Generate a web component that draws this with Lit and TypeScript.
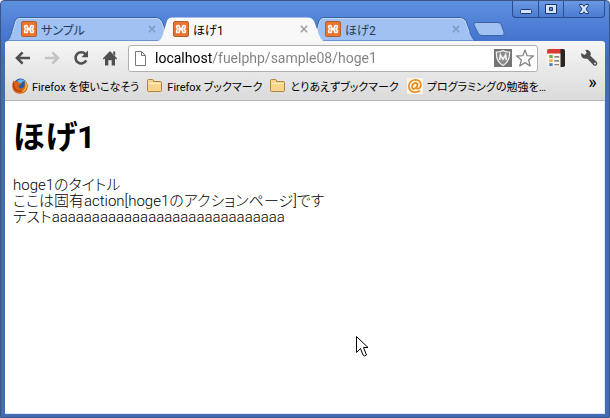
import { LitElement, html, svg, css, nothing } from "lit";
import { customElement, property } from "lit/decorators.js";

const icons: Record<string, unknown> = {
  xampp: svg`<rect x="0.5" y="0.5" width="15" height="15" rx="1.5" fill="#ec7431" stroke="#b0602f"/>
    <path d="M6 4.5H4.8Q3.6 4.5 3.6 5.6Q3.6 6.8 4.8 8Q3.6 9.2 3.6 10.4Q3.6 11.5 4.8 11.5H5.4Q6.4 11.5 6.4 10.4V9Q8 8 9.6 9V10.4Q9.6 11.5 10.6 11.5H11.2Q12.4 11.5 12.4 10.4Q12.4 9.2 11.2 8Q12.4 6.8 12.4 5.6Q12.4 4.5 11.2 4.5H10.6Q9.6 4.5 9.6 5.6V7Q8 8 6.4 7V5.6Q6.4 4.5 5.4 4.5" fill="none" stroke="#fff" stroke-width="1.6"/>`,
  back: svg`<path d="M15 8H3M7.6 2.4L2 8L7.6 13.6" fill="none" stroke="#505050" stroke-width="2.6"/>`,
  forward: svg`<path d="M1 8H13M8.4 2.4L14 8L8.4 13.6" fill="none" stroke="#c4c4c4" stroke-width="2.6"/>`,
  reload: svg`<path d="M12.4 4.2A5.6 5.6 0 1 0 13.2 10.4" fill="none" stroke="#505050" stroke-width="2.6"/><path d="M15 0.6V7.2H8.4Z" fill="#505050"/>`,
  home: svg`<path d="M8 1L15.2 8.6L14.2 9.6L13 8.6V15.4H9.7V10.2H6.3V15.4H3V8.6L1.8 9.6L0.8 8.6Z" fill="#505050"/><path d="M11.2 1.4H13.2V6L11.2 4Z" fill="#505050"/>`,
  page: svg`<path d="M2.5 1.5H8.5L12.5 5.5V15.5H2.5Z" fill="#fff" stroke="#777"/><path d="M8.5 1.5V5.5H12.5" fill="none" stroke="#777"/>`,
  star: svg`<path d="M8 0L10.2 5.7L16.4 6L11.6 9.9L13.2 16L8 12.6L2.8 16L4.4 9.9L-0.4 6L5.8 5.7Z" fill="#fff" stroke="#858585" stroke-width="1.3" stroke-linejoin="round"/>`,
  shield: svg`<rect x="-1" y="-1" width="18" height="18" fill="#747474"/><path d="M8 0.6Q10.5 2.2 14.6 2Q15.2 11.4 8 15.4Q0.8 11.4 1.4 2Q5.5 2.2 8 0.6Z" fill="#8c8c8c" stroke="#f2f2f2" stroke-width="1.2"/><path d="M4.6 10L5.4 5L8 9.2L10.6 5L11.4 10" fill="none" stroke="#f2f2f2" stroke-width="1.7"/>`,
  list: svg`<path d="M1 0H13V16H1Q0 16 0 15V1Q0 0 1 0Z" fill="#f7f4ee"/><path d="M0 4V1.5Q0 0 1.5 0H13V4Z" fill="#d9392f"/><path d="M12 0H14.5Q16 0 16 1.5V14.5Q16 16 14.5 16H12Z" fill="#2b2626"/><rect x="2" y="5.4" width="3" height="2.6" fill="#72a845"/><rect x="2" y="9" width="3" height="2.6" fill="#f0b03a"/><rect x="2" y="12.6" width="3" height="2.6" fill="#4384d8"/><path d="M6.5 7H10.8M6.5 10.5H10.8M6.5 14H10.8" stroke="#666"/>`,
  wrench: svg`<path d="M1.2 3.6L4 5.4L6 3.6L4.8 0.8Q8.6 0.4 9.6 4Q9.6 5.4 9.2 6L15 11.6Q16 13 14.8 14.4Q13.2 15.4 12 14.4L6.6 8.6Q2 9.4 1 5.6Z" fill="#505050"/><circle cx="13.3" cy="12.9" r="0.8" fill="#eee"/>`,
  firefox: svg`<circle cx="8.4" cy="7.6" r="7" fill="#285aa3"/><path d="M5 3Q9 -0.6 13 3Q10 3 9.6 5.4Q7 6 5 3Z" fill="#67b7e8"/><path d="M1.4 2.4Q2.6 3.6 4 3.6Q6.4 3.6 7.4 5Q9.2 5.2 9 6Q8.4 7.2 6.6 7.6Q6 9.8 8.4 10.6Q11 10.8 12.2 8.6Q13.4 5.8 12.4 3Q16 5 15.8 9Q14.6 15.6 8 15.8Q1.2 15.4 0.2 9Q0 5 1.4 2.4Z" fill="#dc6213"/><path d="M12.6 3Q15.6 5.4 14.8 9.4Q12.8 14 8.6 14.2Q12.6 12.4 13.4 8.8Q13.8 5.6 12.6 3Z" fill="#f7c63b"/><path d="M1.6 5Q1 9 4 12Q7 14 10 13" fill="none" stroke="#a83a12" stroke-width="1.2"/>`,
  folder: svg`<path d="M0.5 12.5V2.5Q0.5 1.5 1.5 1.5H5.5Q6.5 1.5 6.5 3.5H13.5Q14.5 3.5 14.5 4.5V12.5Q14.5 13.5 13.5 13.5H1.5Q0.5 13.5 0.5 12.5Z" fill="#f8d58a" stroke="#b08438"/><path d="M1.5 5.5H13.5" stroke="#fff0c0"/>`,
  at: svg`<rect width="16" height="16" fill="#fbf5e4"/><path d="M10.8 5L9.8 9.4Q9.6 11 11 10.8Q14 9.8 14 6.8Q13.4 2 8.4 1.8Q2.2 2.4 1.8 8.4Q2.2 14 8 14.2Q11 14.2 13 12.6M10.3 6.6Q9.4 4.6 7.8 5Q5 6 5 9Q5.4 11.4 7.4 10.8Q9.2 10 9.9 8.4" fill="none" stroke="#e88a1a" stroke-width="1.6"/>`,
  close: svg`<path d="M4.8 4.8L11.2 11.2M11.2 4.8L4.8 11.2" stroke="currentColor" stroke-width="1.6"/>`,
  minimize: svg`<rect x="2.5" y="8.5" width="11" height="4" rx="1" fill="#d3e2fb" stroke="#1f3768"/>`,
  maximize: svg`<path d="M2.5 3.5H13.5V12.5H2.5ZM6.5 6.5V9.5H9.5V6.5Z" fill="#d3e2fb" fill-rule="evenodd" stroke="#1f3768"/>`,
  quit: svg`<path d="M3.5 3.5H6.5L8 5.3L9.5 3.5H12.5V4.5L10 8L12.5 11.5V12.5H9.5L8 10.7L6.5 12.5H3.5V11.5L6 8L3.5 4.5Z" fill="#d3e2fb" stroke="#1f3768"/>`,
};

@customElement("ui-icon")
export class UiIcon extends LitElement {
  @property() name = "";
  static styles = css`
    :host { display: block; flex: none; width: 16px; height: 16px; }
    svg { display: block; width: 100%; height: 100%; overflow: visible; }
  `;
  render() {
    return html`<svg viewBox="0 0 16 16" aria-hidden="true">${icons[this.name] ?? nothing}</svg>`;
  }
}

const tabs = [
  { title: "サンプル", active: false },
  { title: "ほげ1", active: true },
  { title: "ほげ2", active: false },
];

const bookmarks = [
  { icon: "firefox", label: "Firefox を使いこなそう" },
  { icon: "folder", label: "Firefox ブックマーク" },
  { icon: "folder", label: "とりあえずブックマーク" },
  { icon: "at", label: "プログラミングの勉強を…" },
];

@customElement("app-root")
export class AppRoot extends LitElement {
  static styles = css`
    :host {
      display: block;
      font-family: Roboto, "Noto Sans CJK JP", sans-serif;
      font-feature-settings: "palt";
      font-size: 12px;
      color: #000;
    }
    * { box-sizing: border-box; }
    button { padding: 0; border: 0; background: none; color: inherit; font: inherit; }
    .window {
      display: flex;
      flex-direction: column;
      min-height: 100vh;
      padding: 0 4px 3px;
      border: 1px solid #3b5484;
      border-radius: 4px 4px 0 0;
      background: linear-gradient(#5d90e0, #4474cd 40px, #426cb4 60px);
    }
    .titlebar { display: flex; align-items: flex-start; height: 40px; }
    .tabs { display: flex; flex: 1; align-items: flex-end; height: 40px; min-width: 0; }
    .tab {
      position: relative;
      isolation: isolate;
      display: flex;
      align-items: center;
      width: 168px;
      height: 24px;
      margin-right: -16px;
      padding: 0 13px 0 16px;
      color: #223a60;
    }
    .tab.active { z-index: 1; color: #000; }
    .shape { position: absolute; inset: 0; width: 100%; height: 100%; z-index: -1; }
    .tab-title { flex: 1; margin-left: 4px; text-align: left; white-space: nowrap; }
    .tab-close { color: #7d9ac6; }
    .active .tab-close { color: #a0a0a0; }
    .new-tab { width: 33px; height: 14px; margin: 0 0 5px 12px; }
    .new-tab svg { display: block; overflow: visible; }
    .controls {
      display: flex;
      height: 17px;
      border: 1px solid #2b4c8e;
      border-top: 0;
      border-radius: 0 0 4px 4px;
      background: linear-gradient(#6b99e4, #4a7bd0);
    }
    .control { display: flex; justify-content: center; align-items: center; width: 25px; }
    .control + .control { border-left: 1px solid #2b4c8e; }
    .control.wide { width: 41px; }
    .chrome {
      background: linear-gradient(#f6f6f6, #dadada);
      border-bottom: 1px solid #b4b4b4;
      border-radius: 3px 3px 0 0;
    }
    .toolbar { display: flex; align-items: center; height: 34px; padding: 0 7px 0 3px; }
    .nav { display: flex; justify-content: center; align-items: center; width: 29px; height: 26px; }
    .omnibox {
      display: flex;
      flex: 1;
      align-items: center;
      gap: 6px;
      min-width: 0;
      height: 27px;
      margin: 0 9px 0 4px;
      padding: 0 4px;
      background: #fff;
      border: 1px solid #b0b0b0;
      border-radius: 3px;
    }
    .url {
      flex: 1;
      min-width: 0;
      height: 20px;
      padding: 0;
      border: 0;
      outline: 0;
      font: 14px Roboto, sans-serif;
      color: transparent;
      background: linear-gradient(to right, #000 57px, #808080 57px);
      -webkit-background-clip: text;
      background-clip: text;
    }
    .tools { display: flex; gap: 15px; }
    .tools ui-icon { width: 18px; height: 18px; }
    .bookmarks { display: flex; align-items: flex-start; height: 25px; padding: 3px 4px 0 7px; }
    .bookmark {
      display: flex;
      align-items: center;
      gap: 4px;
      height: 16px;
      margin-right: 8px;
      font-size: 11px;
      color: #000;
      text-decoration: none;
      white-space: nowrap;
    }
    .more { margin-left: auto; width: 17px; font-size: 18px; line-height: 8px; }
    .page {
      position: relative;
      flex: 1;
      padding: 18px 8px;
      background: #fff;
      border: 1px solid #dce9fa;
      border-top: 0;
      border-left: 0;
    }
    h1 { margin: 0 0 22px; font-size: 32px; line-height: 36px; font-weight: 700; }
    p { margin: 0; font-size: 15px; line-height: 16px; font-weight: 300; }
    .cursor { position: absolute; left: 351px; top: 235px; width: 13px; height: 21px; }
  `;

  private renderTab(tab: { title: string; active: boolean }) {
    return html`
      <div class="tab ${tab.active ? "active" : ""}">
        <svg class="shape" viewBox="0 0 168 24" preserveAspectRatio="none" aria-hidden="true">
          <path d="M0 24C4 24 5 20 6 17L10 4Q11 0.5 15 0.5H151Q155 0.5 157 4L162 18C164 22 165 24 168 24Z"
            fill=${tab.active ? "#f8f8f8" : "#a0c1f1"} stroke=${tab.active ? "none" : "#3a62a9"} />
          <path d="M8 15L11 4Q12 1.5 15 1.5H151Q154 1.5 156 4L160 15" fill="none" stroke=${tab.active ? "#fff" : "#bed6f8"} />
        </svg>
        <ui-icon name="xampp"></ui-icon>
        <span class="tab-title">${tab.title}</span>
        <button class="tab-close" aria-label="閉じる"><ui-icon name="close"></ui-icon></button>
      </div>`;
  }

  render() {
    return html`
      <div class="window">
        <header class="titlebar">
          <div class="tabs">
            ${tabs.map((t) => this.renderTab(t))}
            <button class="new-tab" aria-label="新しいタブ">
              <svg width="33" height="14" viewBox="0 0 33 14" aria-hidden="true">
                <path d="M3 0.5H24Q27 0.5 28 2L31 10Q32 13.5 29 13.5H9Q6 13.5 5 11L1 3Q0 0.5 3 0.5Z" fill="#a0c1f1" stroke="#3a62a9"/>
              </svg>
            </button>
          </div>
          <div class="controls">
            <button class="control" aria-label="最小化"><ui-icon name="minimize"></ui-icon></button>
            <button class="control" aria-label="最大化"><ui-icon name="maximize"></ui-icon></button>
            <button class="control wide" aria-label="ウィンドウを閉じる"><ui-icon name="quit"></ui-icon></button>
          </div>
        </header>
        <div class="chrome">
          <div class="toolbar">
            <button class="nav" aria-label="戻る"><ui-icon name="back"></ui-icon></button>
            <button class="nav" aria-label="進む"><ui-icon name="forward"></ui-icon></button>
            <button class="nav" aria-label="再読み込み"><ui-icon name="reload"></ui-icon></button>
            <button class="nav" aria-label="ホーム"><ui-icon name="home"></ui-icon></button>
            <div class="omnibox">
              <ui-icon name="page"></ui-icon>
              <input class="url" aria-label="アドレス" .value=${"localhost/fuelphp/sample08/hoge1"} />
              <button aria-label="保護"><ui-icon name="shield"></ui-icon></button>
              <button aria-label="ブックマークに追加"><ui-icon name="star"></ui-icon></button>
            </div>
            <div class="tools">
              <button aria-label="拡張機能"><ui-icon name="list"></ui-icon></button>
              <button aria-label="設定"><ui-icon name="wrench"></ui-icon></button>
            </div>
          </div>
          <nav class="bookmarks">
            ${bookmarks.map((b) => html`<a class="bookmark" href="#"><ui-icon name=${b.icon}></ui-icon>${b.label}</a>`)}
            <button class="more">»</button>
          </nav>
        </div>
        <main class="page">
          <h1>ほげ1</h1>
          <p>hoge1のタイトル</p>
          <p>ここは固有action[hoge1のアクションページ]です</p>
          <p>テストaaaaaaaaaaaaaaaaaaaaaaaaaaaaa</p>
          <svg class="cursor" viewBox="0 0 13 21" aria-hidden="true">
            <path d="M0.5 0.5V16.5L4.5 12.5L7 19Q8.5 21 10.5 19L7.5 11.5H12Z" fill="#fff" stroke="#000"/>
          </svg>
        </main>
      </div>
    `;
  }
}
